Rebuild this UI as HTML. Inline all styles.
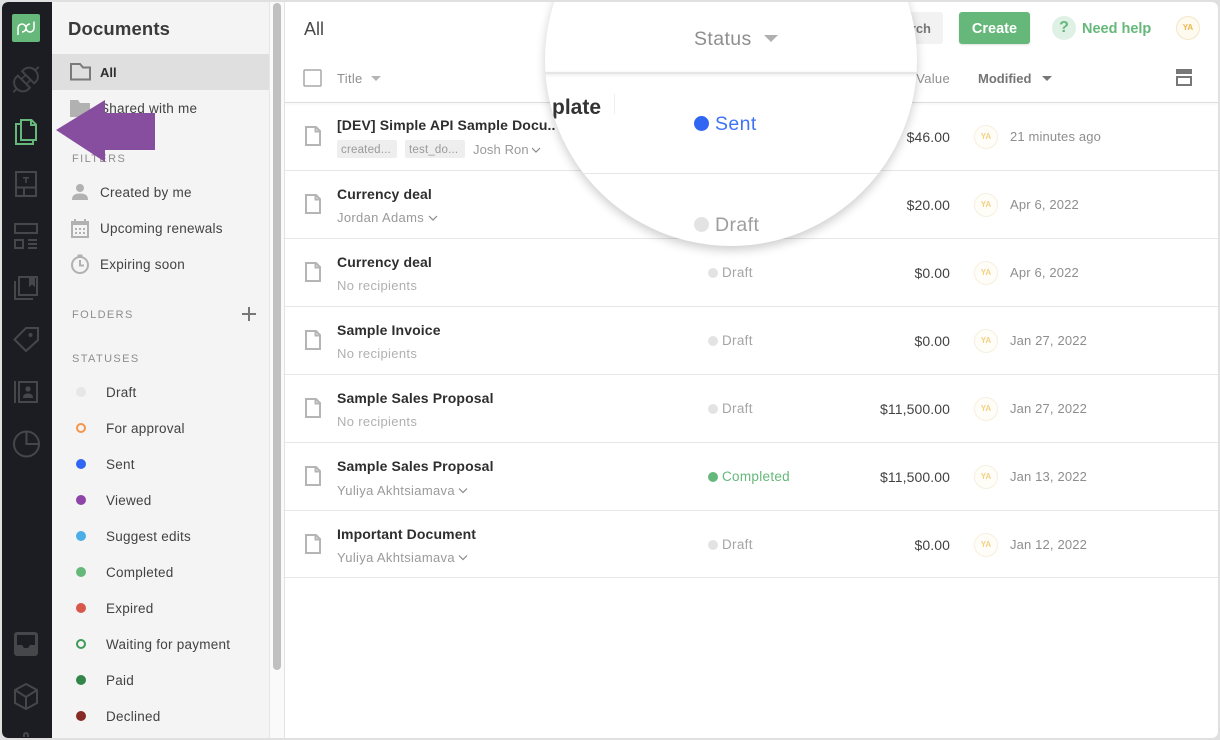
<!DOCTYPE html>
<html><head><meta charset="utf-8">
<style>
html,body{margin:0;padding:0;background:#e0e0e0;}
body{width:1220px;height:740px;position:relative;overflow:hidden;font-family:"Liberation Sans",sans-serif;font-size:13px;color:#424242;}
#app{position:absolute;left:2px;top:2px;width:1216px;height:736px;background:#fff;border-radius:6px;overflow:hidden;}
.t{position:absolute;white-space:nowrap;line-height:16px;}
.abs{position:absolute;}
.s{position:absolute;left:0;top:0;}
.b{font-weight:700;}
.dot{position:absolute;border-radius:50%;width:10px;height:10px;}
.ring{box-sizing:border-box;border:2px solid;background:transparent;}
.ln{position:absolute;left:285px;width:935px;height:1px;background:#e6e6e6;}
.title{left:337px;font-weight:700;font-size:14px;letter-spacing:.12px;color:#2e2e2e;}
.sub{left:337px;color:#9a9a9a;letter-spacing:.33px;}
.st{left:722px;color:#a5a5a5;font-size:13.5px;letter-spacing:.3px;}
.val{right:270px;color:#424242;text-align:right;letter-spacing:.1px;font-size:14px;}
.dt{left:1010px;color:#8e8e8e;font-size:13px;letter-spacing:.15px;}
.ya{position:absolute;left:974px;width:24px;height:24px;box-sizing:border-box;border-radius:50%;border:1px solid #f7efdf;background:#fffdf8;color:#f3d185;font-size:8px;font-weight:700;text-align:center;line-height:22px;}
.side{left:100px;color:#424242;font-size:13.5px;letter-spacing:.25px;}
.sl{left:106px;color:#424242;font-size:13.5px;letter-spacing:.25px;}
.cap{left:72px;color:#8e8e8e;font-size:11px;letter-spacing:1.4px;}
</style></head>
<body>
<div id="app"></div>
<!-- nav rail -->
<div class="abs" style="left:2px;top:2px;width:50px;height:736px;background:#1b1d23;border-radius:6px 0 0 6px;"></div>
<!-- side panel -->
<div class="abs" style="left:52px;top:2px;width:218px;height:736px;background:#f4f4f4;"></div>
<div class="abs" style="left:269px;top:2px;width:1px;height:736px;background:#e6e6e6;"></div>
<div class="abs" style="left:270px;top:2px;width:14px;height:736px;background:#fafafa;"></div>
<div class="abs" style="left:284px;top:2px;width:1px;height:736px;background:#e3e3e3;"></div>
<div class="abs" style="left:273px;top:3px;width:8px;height:667px;background:#c0c0c0;border-radius:4px;"></div>
<div class="abs" style="left:52px;top:54px;width:217px;height:36px;background:#dfdfdf;"></div>

<svg class="s" width="1220" height="740" viewBox="0 0 1220 740" fill="none">
 <!-- logo -->
 <rect x="12" y="14" width="28" height="28" rx="2" fill="#65b87a"/>
 <path d="M18 35V28a4 4 0 0 1 8 0a4 4 0 0 1-4 4M34 21.500V28a4 4 0 0 1-8 0a4 4 0 0 1 4-4" stroke="#fff" stroke-width="1.500"/>
 <!-- plug -->
 <g stroke="#414246" stroke-width="2" transform="rotate(-45 26 79.500)">
  <path d="M8 79.500h5M39 79.500h5"/>
  <path d="M23 71v17h-3a7.500 8.500 0 0 1-7-8.500a7.500 8.500 0 0 1 7-8.500z"/>
  <path d="M29 71v17h3a7.500 8.500 0 0 0 7-8.500a7.500 8.500 0 0 0-7-8.500z"/>
  <path d="M23 76h6M23 83h6" stroke-width="1.600"/>
 </g>
 <!-- docs active -->
 <g stroke="#65b87a" stroke-width="2">
  <path d="M21 120h10.500l4.500 4.500V140H21z"/>
  <path d="M31 120v5h5"/>
  <path d="M21 124h-5v20h17v-4"/>
 </g>
 <!-- template -->
 <g stroke="#46474b" stroke-width="2">
  <rect x="16" y="172" width="20" height="24"/>
  <path d="M16 187.500h20M24 187.500v9"/>
 </g>
 <path d="M23 177h6v1.500h-2.200V183h-1.600v-4.500H23z" fill="#46474b"/>
 <!-- catalog -->
 <g stroke="#46474b" stroke-width="2">
  <rect x="15" y="224" width="22" height="9"/>
  <rect x="15" y="240" width="8" height="8"/>
  <path d="M28 240h9M28 244h9M28 248h9"/>
 </g>
 <!-- library -->
 <g stroke="#46474b" stroke-width="2">
  <rect x="19" y="277" width="18" height="18"/>
  <path d="M15 281v18h18"/>
 </g>
 <path d="M29 277h6v10l-3-2.500-3 2.500z" fill="#46474b"/>
 <!-- tag -->
 <path d="M26 328h12v12l-12 11-11.500-11.500z" stroke="#46474b" stroke-width="2"/>
 <circle cx="30.500" cy="335" r="2" fill="#46474b"/>
 <!-- contacts -->
 <g stroke="#46474b" stroke-width="2">
  <rect x="19" y="382" width="18" height="20"/>
  <path d="M15 381v22"/>
 </g>
 <circle cx="28" cy="389" r="2.600" fill="#46474b"/>
 <path d="M23 398c0-3.500 2-4.500 5-4.500s5 1 5 4.500z" fill="#46474b"/>
 <!-- pie -->
 <g stroke="#46474b" stroke-width="2">
  <circle cx="26.500" cy="444" r="12.500"/>
  <path d="M26.500 431.500V444H39"/>
 </g>
 <!-- inbox -->
 <path d="M17 632h18a3 3 0 0 1 3 3v18a3 3 0 0 1-3 3H17a3 3 0 0 1-3-3V635a3 3 0 0 1 3-3zm0 3v10h5l2 3h4l2-3h5v-10z" fill="#46474b" fill-rule="evenodd"/>
 <!-- cube -->
 <g stroke="#46474b" stroke-width="2">
  <path d="M26 684l11 6v13l-11 6-11-6v-13z"/>
  <path d="M15 690l11 7 11-7M26 697v12"/>
 </g>
 <path d="M24 737v-2a2 2 0 0 1 4 0v2" stroke="#46474b" stroke-width="2"/>

 <!-- All folder -->
 <path d="M71 64h9l3 3.500h7v12H71z" stroke="#7a7a7a" stroke-width="2"/>
 <!-- shared folder -->
 <path d="M70 100h8l2 3h10v14H70z" fill="#b1b1b1"/>
 <!-- person -->
 <circle cx="80" cy="188" r="4" fill="#b1b1b1"/>
 <path d="M72 200c0-5 3-6.500 8-6.500s8 1.500 8 6.500z" fill="#b1b1b1"/>
 <!-- calendar -->
 <g fill="#b1b1b1">
  <path d="M72 222h16v15H72z" fill="none" stroke="#b1b1b1" stroke-width="2"/>
  <rect x="72" y="221" width="16" height="4"/>
  <rect x="74" y="219" width="2" height="3"/><rect x="84" y="219" width="2" height="3"/>
  <rect x="75" y="228" width="2" height="2"/><rect x="79" y="228" width="2" height="2"/><rect x="83" y="228" width="2" height="2"/>
  <rect x="75" y="232" width="2" height="2"/><rect x="79" y="232" width="2" height="2"/><rect x="83" y="232" width="2" height="2"/>
 </g>
 <!-- clock -->
 <circle cx="80" cy="265" r="8" stroke="#b1b1b1" stroke-width="2"/>
 <path d="M80 260v5.500h4M77.500 255.500h5" stroke="#b1b1b1" stroke-width="2"/>
 <!-- plus -->
 <path d="M249 307v14M242 314h14" stroke="#777" stroke-width="2"/>

 <!-- header controls -->
 <rect x="304" y="70" width="17" height="16" rx="1" stroke="#a8a8a8" stroke-width="1.500"/>
 <path d="M371 76h10l-5 5z" fill="#b5b5b5"/>
 <path d="M1042 76h10l-5 5z" fill="#777"/>
 <rect x="1176" y="69" width="16" height="5" fill="#777"/>
 <path d="M1177 77h14v8h-14z" stroke="#777" stroke-width="2"/>
 <!-- doc icons -->
 <g stroke="#b5b5b5" stroke-width="2">
  <path d="M306 127h10l4 4v14h-14zM315.500 127v4.500h4.500"/>
  <path d="M306 195h10l4 4v14h-14zM315.500 195v4.500h4.500"/>
  <path d="M306 263h10l4 4v14h-14zM315.500 263v4.500h4.500"/>
  <path d="M306 331h10l4 4v14h-14zM315.500 331v4.500h4.500"/>
  <path d="M306 399h10l4 4v14h-14zM315.500 399v4.500h4.500"/>
  <path d="M306 467h10l4 4v14h-14zM315.500 467v4.500h4.500"/>
  <path d="M306 535h10l4 4v14h-14zM315.500 535v4.500h4.500"/>
 </g>
 <!-- chevrons -->
 <g stroke="#8a8a8a" stroke-width="1.200">
  <path d="M532 148l4 4 4-4M429 216l4 4 4-4M459 488.500l4 4 4-4M459 555.500l4 4 4-4"/>
 </g>
</svg>

<!-- sidebar text -->
<div class="t b" style="left:68px;top:20px;font-size:18.5px;line-height:18px;letter-spacing:.15px;color:#3a3a3a;">Documents</div>
<div class="t b" style="left:100px;top:65px;color:#2e2e2e;">All</div>
<div class="t side" style="top:101px;">Shared with me</div>
<div class="t cap" style="top:151px;">FILTERS</div>
<div class="t side" style="top:185px;">Created by me</div>
<div class="t side" style="top:221px;">Upcoming renewals</div>
<div class="t side" style="top:257px;">Expiring soon</div>
<div class="t cap" style="top:307px;">FOLDERS</div>
<div class="t cap" style="top:351px;">STATUSES</div>

<div class="dot" style="left:76px;top:387px;background:#e6e6e6;"></div><div class="t sl" style="top:385px;">Draft</div>
<div class="dot ring" style="left:76px;top:423px;border-color:#f2964b;"></div><div class="t sl" style="top:421px;">For approval</div>
<div class="dot" style="left:76px;top:459px;background:#3166f3;"></div><div class="t sl" style="top:457px;">Sent</div>
<div class="dot" style="left:76px;top:495px;background:#8e44a8;"></div><div class="t sl" style="top:493px;">Viewed</div>
<div class="dot" style="left:76px;top:531px;background:#4baee8;"></div><div class="t sl" style="top:529px;">Suggest edits</div>
<div class="dot" style="left:76px;top:567px;background:#65b87a;"></div><div class="t sl" style="top:565px;">Completed</div>
<div class="dot" style="left:76px;top:603px;background:#d9584c;"></div><div class="t sl" style="top:601px;">Expired</div>
<div class="dot ring" style="left:76px;top:639px;border-color:#3e9a57;"></div><div class="t sl" style="top:637px;">Waiting for payment</div>
<div class="dot" style="left:76px;top:675px;background:#33864a;"></div><div class="t sl" style="top:673px;">Paid</div>
<div class="dot" style="left:76px;top:711px;background:#862b25;"></div><div class="t sl" style="top:709px;">Declined</div>

<!-- top bar -->
<div class="t" style="left:304px;top:20px;font-size:18px;line-height:18px;color:#4a4a4a;">All</div>
<div class="abs" style="left:880px;top:12px;width:63px;height:32px;background:#f2f2f2;border-radius:3px;"></div>
<div class="t b" style="left:880px;top:21px;width:51px;text-align:right;color:#757575;">Search</div>
<div class="abs b" style="left:959px;top:12px;width:71px;height:32px;background:#65b87a;border-radius:3px;color:#fff;text-align:center;line-height:35px;font-size:14.5px;box-shadow:0 1px 2px rgba(0,0,0,.12);">Create</div>
<div class="abs b" style="left:1052px;top:16px;width:24px;height:24px;border-radius:50%;background:#dff1e4;color:#65b87a;text-align:center;line-height:24px;font-size:16px;">?</div>
<div class="t b" style="left:1082px;top:21px;color:#65b87a;font-size:14.5px;">Need help</div>
<div class="abs b" style="left:1176px;top:16px;width:24px;height:24px;box-sizing:border-box;border-radius:50%;border:1px solid #f5e6c8;background:#fffaf0;color:#ecb64a;font-size:8px;text-align:center;line-height:22px;">YA</div>

<!-- table head -->
<div class="t" style="left:337px;top:71px;color:#8e8e8e;letter-spacing:.3px;">Title</div>
<div class="t" style="left:880px;top:71px;width:70px;text-align:right;color:#8e8e8e;letter-spacing:.3px;">Value</div>
<div class="t b" style="left:978px;top:71px;color:#757575;">Modified</div>
<div class="abs" style="left:285px;top:102px;width:934px;height:1px;background:#dedede;box-shadow:0 1px 2px rgba(0,0,0,.08);"></div>

<!-- rows -->
<div class="ln" style="top:170px;"></div>
<div class="ln" style="top:238px;"></div>
<div class="ln" style="top:306px;"></div>
<div class="ln" style="top:374px;"></div>
<div class="ln" style="top:442px;"></div>
<div class="ln" style="top:510px;"></div>
<div class="ln" style="top:577px;"></div>

<div class="t title" style="top:117px;">[DEV] Simple API Sample Docu..</div>
<div class="abs" style="left:337px;top:140px;width:60px;height:18px;background:#eee;border-radius:2px;"></div>
<div class="t" style="left:341px;top:142px;color:#9a9a9a;font-size:11.500px;letter-spacing:.2px;">created...</div>
<div class="abs" style="left:405px;top:140px;width:60px;height:18px;background:#eee;border-radius:2px;"></div>
<div class="t" style="left:409px;top:142px;color:#9a9a9a;font-size:11.500px;letter-spacing:.2px;">test_do...</div>
<div class="t sub" style="left:473px;top:142px;letter-spacing:.1px;">Josh Ron</div>
<div class="t val" style="top:129px;">$46.00</div>
<div class="ya" style="top:125px;">YA</div>
<div class="t dt" style="top:129px;">21 minutes ago</div>

<div class="t title" style="top:186px;">Currency deal</div>
<div class="t sub" style="top:210px;">Jordan Adams</div>
<div class="t val" style="top:197px;">$20.00</div>
<div class="ya" style="top:193px;">YA</div>
<div class="t dt" style="top:197px;">Apr 6, 2022</div>

<div class="t title" style="top:254px;">Currency deal</div>
<div class="t sub" style="top:278px;color:#b0b0b0;">No recipients</div>
<div class="dot" style="left:708px;top:268px;background:#e3e3e3;"></div>
<div class="t st" style="top:265px;">Draft</div>
<div class="t val" style="top:265px;">$0.00</div>
<div class="ya" style="top:261px;">YA</div>
<div class="t dt" style="top:265px;">Apr 6, 2022</div>

<div class="t title" style="top:322px;">Sample Invoice</div>
<div class="t sub" style="top:346px;color:#b0b0b0;">No recipients</div>
<div class="dot" style="left:708px;top:336px;background:#e3e3e3;"></div>
<div class="t st" style="top:333px;">Draft</div>
<div class="t val" style="top:333px;">$0.00</div>
<div class="ya" style="top:329px;">YA</div>
<div class="t dt" style="top:333px;">Jan 27, 2022</div>

<div class="t title" style="top:390px;">Sample Sales Proposal</div>
<div class="t sub" style="top:414px;color:#b0b0b0;">No recipients</div>
<div class="dot" style="left:708px;top:404px;background:#e3e3e3;"></div>
<div class="t st" style="top:401px;">Draft</div>
<div class="t val" style="top:401px;">$11,500.00</div>
<div class="ya" style="top:397px;">YA</div>
<div class="t dt" style="top:401px;">Jan 27, 2022</div>

<div class="t title" style="top:458px;">Sample Sales Proposal</div>
<div class="t sub" style="top:483px;">Yuliya Akhtsiamava</div>
<div class="dot" style="left:708px;top:472px;background:#65b87a;"></div>
<div class="t st" style="top:469px;color:#65b87a;">Completed</div>
<div class="t val" style="top:469px;">$11,500.00</div>
<div class="ya" style="top:465px;">YA</div>
<div class="t dt" style="top:469px;">Jan 13, 2022</div>

<div class="t title" style="top:526px;">Important Document</div>
<div class="t sub" style="top:550px;">Yuliya Akhtsiamava</div>
<div class="dot" style="left:708px;top:540px;background:#e3e3e3;"></div>
<div class="t st" style="top:537px;">Draft</div>
<div class="t val" style="top:537px;">$0.00</div>
<div class="ya" style="top:533px;">YA</div>
<div class="t dt" style="top:537px;">Jan 12, 2022</div>

<!-- magnifier -->
<div class="abs" style="left:545px;top:-126px;width:372px;height:372px;border-radius:50%;background:#fff;box-shadow:0 4px 10px rgba(0,0,0,.2);overflow:hidden;">
 <div class="abs" style="left:0;top:198px;width:372px;height:2px;background:#e6e6e6;box-shadow:0 1px 3px rgba(0,0,0,.12);"></div>
 <div class="abs" style="left:0;top:299px;width:372px;height:1px;background:#e6e6e6;"></div>
 <div class="t b" style="left:7px;top:222px;font-size:21px;line-height:24px;color:#333;">plate</div>
 <div class="abs" style="left:69px;top:220px;width:1px;height:20px;background:#eee;"></div>
 <div class="t" style="left:149px;top:152px;font-size:19.5px;line-height:26px;color:#8e8e8e;letter-spacing:.4px;">Status</div>
 <svg class="abs" style="left:218px;top:160px;" width="16" height="9"><path d="M1 1h14l-7 7z" fill="#b0b0b0"/></svg>
 <div class="abs" style="left:149px;top:241.500px;width:15px;height:15px;border-radius:50%;background:#3166f3;"></div>
 <div class="t" style="left:170px;top:237px;font-size:19.5px;line-height:26px;color:#3f73f5;letter-spacing:.4px;">Sent</div>
 <div class="abs" style="left:149px;top:343px;width:15px;height:15px;border-radius:50%;background:#e3e3e3;"></div>
 <div class="t" style="left:170px;top:338px;font-size:19.5px;line-height:26px;color:#9e9e9e;letter-spacing:.4px;">Draft</div>
</div>

<!-- arrow -->
<svg class="s" width="1220" height="740" style="pointer-events:none;"><path d="M56 130L105 100V113H155V150H105V162Z" fill="#874ea0"/></svg>

<!-- outer frame corner mask -->
<div class="abs" style="left:0;top:0;width:1220px;height:740px;box-sizing:border-box;border:2px solid #e0e0e0;border-radius:8px;"></div>
</body></html>
